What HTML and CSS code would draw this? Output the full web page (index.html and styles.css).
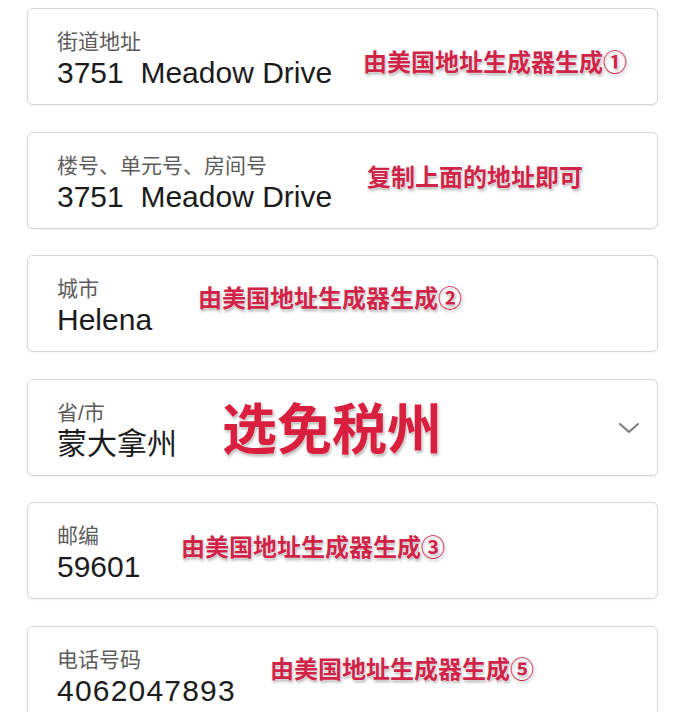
FILE: index.html
```html
<!DOCTYPE html>
<html lang="zh-CN">
<head>
    <meta charset="UTF-8">
    <meta name="viewport" content="width=device-width, initial-scale=1.0">
    <title>收货地址</title>
    <link rel="stylesheet" href="styles.css">
</head>
<body>
    <div class="form">
        <div class="field">
            <div class="field-text">
                <div class="field-label">街道地址</div>
                <div class="field-value">3751&nbsp; Meadow Drive</div>
            </div>
            <span class="note note-street">由美国地址生成器生成①</span>
        </div>

        <div class="field">
            <div class="field-text">
                <div class="field-label">楼号、单元号、房间号</div>
                <div class="field-value">3751&nbsp; Meadow Drive</div>
            </div>
            <span class="note note-unit">复制上面的地址即可</span>
        </div>

        <div class="field">
            <div class="field-text">
                <div class="field-label">城市</div>
                <div class="field-value">Helena</div>
            </div>
            <span class="note note-city">由美国地址生成器生成②</span>
        </div>

        <div class="field">
            <div class="field-text">
                <div class="field-label">省/市</div>
                <div class="field-value">蒙大拿州</div>
            </div>
            <span class="note note-big note-state">选免税州</span>
            <svg class="chevron" width="24" height="12" viewBox="0 0 24 12">
                <polyline points="3,2 12,10 21,2" fill="none" stroke="#7a7a7a" stroke-width="2" stroke-linecap="round" stroke-linejoin="round"/>
            </svg>
        </div>

        <div class="field">
            <div class="field-text">
                <div class="field-label">邮编</div>
                <div class="field-value">59601</div>
            </div>
            <span class="note note-zip">由美国地址生成器生成③</span>
        </div>

        <div class="field">
            <div class="field-text">
                <div class="field-label">电话号码</div>
                <div class="field-value field-value-phone">4062047893</div>
            </div>
            <span class="note note-phone">由美国地址生成器生成⑤</span>
        </div>
    </div>
</body>
</html>
```

FILE: styles.css
```css
body {
    margin: 0;
    padding: 0;
    background: #fff;
    font-family: "Liberation Sans", "Noto Sans CJK SC", sans-serif;
    overflow: hidden;
}

.form {
    display: flex;
    flex-direction: column;
    gap: 26.5px;
    padding: 8px 20px 0 27px;
}

.field {
    position: relative;
    display: flex;
    align-items: flex-start;
    height: 97px;
    box-sizing: border-box;
    padding: 21px 16px 0 29px;
    border: 1px solid #d6d6d6;
    border-radius: 6px;
    box-shadow: 0 1px 2px rgba(0, 0, 0, 0.05);
    background: #fff;
}

.field-label {
    font-size: 21px;
    line-height: 24px;
    color: #5c5c5c;
}

.field-value {
    margin-top: 2px;
    font-size: 30px;
    line-height: 34px;
    color: #1c1c1c;
}

.field-value-phone {
    letter-spacing: 1.2px;
}

.chevron {
    margin-left: auto;
    margin-top: 21px;
}

/* red annotations stamped over the form */
.note {
    position: absolute;
    font-family: "Noto Sans CJK SC", sans-serif;
    font-size: 24px;
    line-height: 30px;
    font-weight: 700;
    color: #cf2448;
    white-space: nowrap;
    text-shadow: 0 0 1px #fff, 0 0 2px #fff, 1px 2px 3px rgba(0, 0, 0, 0.35);
}

.note-big {
    font-size: 55px;
    line-height: 64px;
    color: #d81f3e;
}

.note-street { left: 335px; top: 37px; }
.note-unit { left: 339px; top: 28px; }
.note-city { left: 170px; top: 26px; }
.note-state { left: 194px; top: 13px; }
.note-zip { left: 153px; top: 28px; }
.note-phone { left: 242px; top: 26px; }
```
